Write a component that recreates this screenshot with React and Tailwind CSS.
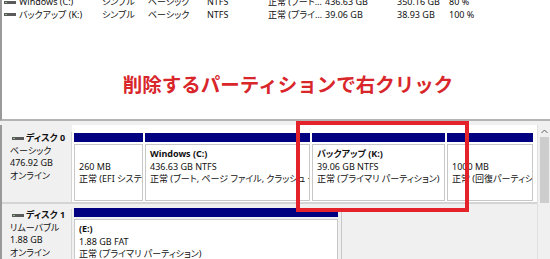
import React from 'react';

const ui = "font-['Noto_Sans','Noto_Sans_CJK_JP',sans-serif] [font-feature-settings:'palt']";

function BarIcon() {
  return (
    <svg width="12" height="5" viewBox="0 0 12 5" className="shrink-0">
      <rect x="0" y="1" width="12" height="3" fill="#5a5a5a" />
      <rect x="1" y="2" width="2" height="1" fill="#8fbf8f" />
    </svg>
  );
}

const volumes = [
  ['Windows (C:)', 'シンプル', 'ベーシック', 'NTFS', '正常 (ブート…', '436.63 GB', '350.16 GB', '80 %'],
  ['バックアップ (K:)', 'シンプル', 'ベーシック', 'NTFS', '正常 (プライ…', '39.06 GB', '38.93 GB', '100 %'],
];

function VolumeRow({ v }) {
  return (
    <div className="flex h-[12.5px] leading-[12.5px] items-center whitespace-nowrap">
      <div className="w-[100px] flex items-center gap-[3px] pl-[2px]">
        <BarIcon />
        <span>{v[0]}</span>
      </div>
      <div className="w-[46px]">{v[1]}</div>
      <div className="w-[59px]">{v[2]}</div>
      <div className="w-[61px]">{v[3]}</div>
      <div className="w-[57px]">{v[4]}</div>
      <div className="w-[72px]">{v[5]}</div>
      <div className="w-[52px]">{v[6]}</div>
      <div>{v[7]}</div>
    </div>
  );
}

function Partition({ w, lines, bold }) {
  return (
    <div className="flex flex-col shrink-0" style={{ width: w }}>
      <div className="h-[9px] bg-[#000080]" />
      <div className="mt-[2px] flex-1 border border-[#c8c8c8] bg-white pt-[3px] pl-[4px] overflow-hidden whitespace-nowrap">
        <div className="h-[12.5px] leading-[12.5px] font-bold">{bold}</div>
        {lines.map((l, i) => (
          <div key={i} className="h-[12.5px] leading-[12.5px]">{l}</div>
        ))}
      </div>
    </div>
  );
}

function DiskLabel({ name, lines }) {
  return (
    <div className="w-[70px] shrink-0 bg-[#f0f0f0] border-r border-[#d4d4d4] pl-[8px] whitespace-nowrap">
      <div className="h-[12.5px] leading-[12.5px] flex items-center gap-[2px] pl-[2px] font-bold">
        <BarIcon />
        <span>{name}</span>
      </div>
      {lines.map((l, i) => (
        <div key={i} className="h-[12.5px] leading-[12.5px]">{l}</div>
      ))}
    </div>
  );
}

export default function App() {
  return (
    <div className={`relative w-[550px] h-[259px] overflow-hidden bg-[#f0f0f0] text-[9px] text-[#111] flex flex-col ${ui}`}>
      {/* volume list */}
      <div className="h-[121px] shrink-0 bg-white border-l-2 border-[#9a9a9a] border-b-2 border-b-[#b4b4b4] flex flex-col overflow-hidden">
        <div className="mt-[-4px]">
          {volumes.map((v) => <VolumeRow key={v[0]} v={v} />)}
        </div>
        <div className="mt-[51px] pl-[24px] flex justify-center">
          <span className="text-[19.5px] leading-[24px] font-bold text-[#d8262b] font-['Noto_Sans_CJK_JP',sans-serif] [font-feature-settings:normal]">
            削除するパーティションで右クリック
          </span>
        </div>
      </div>

      <div className="h-[4px] shrink-0" />

      {/* disk area */}
      <div className="flex-1 flex border-l-2 border-[#9a9a9a]">
        <div className="w-[535px] shrink-0 flex flex-col">
          {/* disk 0 */}
          <div className="h-[79px] shrink-0 flex border-b-2 border-[#d4d4d4]">
            <div className="pt-[7px] flex bg-[#f0f0f0]">
              <DiskLabel name="ディスク 0" lines={['ベーシック', '476.92 GB', 'オンライン']} />
            </div>
            <div className="flex-1 bg-white pl-[2px] pt-[8px] pb-[1px] flex gap-[2px]">
              <Partition w={69} lines={['260 MB', '正常 (EFI システム パーティション)']} />
              <Partition w={165} bold="Windows  (C:)" lines={['436.63 GB NTFS', '正常 (ブート, ページ ファイル, クラッシュ ダンプ, プライマリ パーティション)']} />
              <Partition w={133} bold="バックアップ  (K:)" lines={['39.06 GB NTFS', '正常 (プライマリ パーティション)']} />
              <Partition w={86} lines={['1000 MB', '正常 (回復パーティション)']} />
            </div>
          </div>
          {/* disk 1 */}
          <div className="flex-1 flex">
            <div className="pt-[5px] flex bg-[#f0f0f0]">
              <DiskLabel name="ディスク 1" lines={['リムーバブル', '1.88 GB', 'オンライン']} />
            </div>
            <div className="flex-1 pl-[2px] pt-[4px] flex">
              <Partition w={264} bold=" (E:)" lines={['1.88 GB FAT', '正常 (プライマリ パーティション)']} />
              <div className="ml-[3px] w-[1px] bg-[#c8c8c8]" />
            </div>
          </div>
        </div>

        {/* scrollbar */}
        <div className="w-[13px] shrink-0 flex flex-col items-center bg-[#f0f0f0] border-l border-[#e0e0e0]">
          <svg width="7" height="5" viewBox="0 0 7 5" className="mt-[4px]">
            <path d="M0.5 4 L3.5 1 L6.5 4" fill="none" stroke="#606060" strokeWidth="1" />
          </svg>
          <div className="mt-[3px] w-[9px] h-[66px] bg-[#cdcdcd]" />
        </div>
      </div>

      {/* highlight box */}
      <div className="absolute left-[296px] top-[121px] w-[173px] h-[91px] border-4 border-[#e3222a]" />
    </div>
  );
}
